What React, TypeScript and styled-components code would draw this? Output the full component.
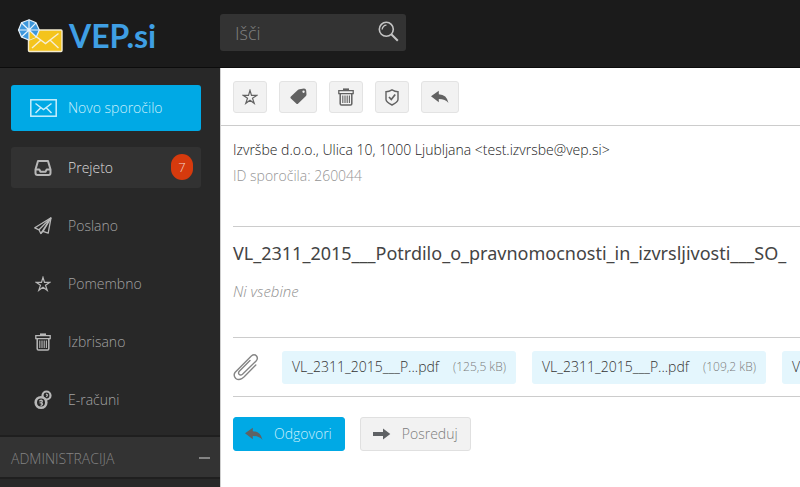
import React from "react";
import styled, { createGlobalStyle, css } from "styled-components";

const GlobalStyle = createGlobalStyle`
  *, *::before, *::after { box-sizing: border-box; }
  html, body, #root { height: 100%; }
  body {
    margin: 0;
    overflow: hidden;
    background: #fff;
    font-family: "Open Sans", "Noto Sans", sans-serif;
    font-size: 14px;
    font-weight: 300;
    line-height: 20px;
  }
  button, input { font: inherit; margin: 0; }
  button { cursor: pointer; }
  svg { display: block; flex: none; }
`;

const Page = styled.div`
  display: flex;
  flex-direction: column;
  min-height: 100%;
`;

const Header = styled.header`
  display: flex;
  align-items: center;
  height: 68px;
  padding-bottom: 3px;
  background: #1b1b1b;
  border-bottom: 1px solid #0c0c0c;
`;

const LogoLink = styled.a`
  display: flex;
  align-items: center;
  gap: 6px;
  width: 220px;
  padding: 8px 0 0 17px;
  color: #3f9fe4;
  font-family: Lato, "Open Sans", sans-serif;
  font-size: 32px;
  font-weight: 700;
  line-height: 40px;
  text-decoration: none;
`;

const Search = styled.form`
  display: flex;
  width: 186px;
  height: 37px;
  background: #333;
  border-radius: 3px;
`;

const SearchInput = styled.input`
  flex: 1;
  min-width: 0;
  padding: 2px 0 0 15px;
  border: 0;
  outline: 0;
  background: transparent;
  color: #ccc;
  font-size: 18px;
  &::placeholder { color: #808080; opacity: 1; }
`;

const SearchButton = styled.button`
  width: 34px;
  padding: 0 0 2px 6px;
  border: 0;
  background: transparent;
  color: #c4c4c4;
`;

const Body = styled.div`
  display: flex;
  flex: 1;
`;

const Sidebar = styled.aside`
  flex: none;
  width: 220px;
  background: #282828;
`;

const SidebarMenu = styled.div`
  padding: 17px 19px 15px 11px;
`;

const Compose = styled.button`
  display: flex;
  align-items: center;
  width: 100%;
  height: 46px;
  padding: 0;
  border: 0;
  border-radius: 3px;
  background: #00a9e5;
  color: #c9effc;
`;

const IconCell = styled.span`
  display: flex;
  justify-content: center;
  width: 57px;
  padding-left: 7px;
`;

const NavList = styled.ul`
  display: flex;
  flex-direction: column;
  gap: 17px;
  margin: 16px 0 0;
  padding: 0;
  list-style: none;
`;

const NavLink = styled.a<{ $active?: boolean }>`
  display: flex;
  align-items: center;
  height: 41px;
  padding-right: 8px;
  border-radius: 3px;
  color: #a2a2a2;
  text-decoration: none;
  ${(p) => p.$active && css`
    background: #323232;
    color: #dcdcdc;
  `}
  svg { color: #b8b8b8; }
`;

const Count = styled.span`
  display: flex;
  align-items: center;
  justify-content: center;
  width: 22px;
  height: 26px;
  margin: 0 0 2px auto;
  border-radius: 11px;
  background: #d63a0d;
  color: #f3d3c8;
  font-size: 13px;
`;

const SectionToggle = styled.button`
  display: flex;
  align-items: center;
  justify-content: space-between;
  width: 100%;
  height: 44px;
  padding: 3px 10px 0 11px;
  border: 0 solid #1f1f1f;
  border-width: 2px 0;
  background: #333;
  color: #838383;
`;

const Main = styled.main`
  flex: 1;
  min-width: 0;
  overflow: hidden;
  border-left: 1px solid #cfcfcf;
`;

const Toolbar = styled.div`
  display: flex;
  gap: 12px;
  padding: 13px 12px 12px;
  border-bottom: 1px solid #ccc;
`;

const ToolButton = styled.button<{ $wide?: boolean }>`
  display: flex;
  align-items: center;
  justify-content: center;
  width: ${(p) => (p.$wide ? 38 : 34)}px;
  height: 32px;
  padding: 0;
  border: 1px solid #e3e3e3;
  border-radius: 3px;
  background: #f2f2f2;
  color: #626262;
`;

const Content = styled.div`
  padding-left: 12px;
`;

const Sender = styled.div`
  height: 100px;
  padding-top: 11px;
  color: #222;
  line-height: 26px;
`;

const MessageId = styled.div`
  color: #959595;
`;

const Message = styled.article`
  height: 111px;
  padding-top: 12px;
  border-top: 1px solid #ccc;
`;

const Subject = styled.h1`
  margin: 0;
  color: #444;
  font-family: "Noto Sans", "Open Sans", sans-serif;
  font-size: 18px;
  font-weight: 400;
  line-height: 28px;
  white-space: nowrap;
`;

const EmptyNote = styled.p`
  margin: 14px 0 0;
  color: #909090;
  font-size: 15px;
  font-style: italic;
`;

const Attachments = styled.div`
  display: flex;
  align-items: center;
  height: 60px;
  border: 0 solid #ccc;
  border-width: 1px 0;
`;

const ClipCell = styled.span`
  flex: none;
  width: 49px;
`;

const AttachmentLink = styled.a`
  display: flex;
  flex: none;
  align-items: center;
  gap: 14px;
  height: 33px;
  margin-right: 16px;
  padding: 0 10px;
  border-radius: 3px;
  background: #e4f6fd;
  color: #333;
  text-decoration: none;
  white-space: nowrap;
`;

const FileSize = styled.span`
  color: #7c7c7c;
  font-size: 12px;
`;

const Actions = styled.div`
  display: flex;
  gap: 15px;
  padding: 20px 0;
`;

const ActionButton = styled.button<{ $primary?: boolean }>`
  display: flex;
  align-items: center;
  gap: 11px;
  height: 34px;
  padding: 0 12px 0 11px;
  border: 1px solid ${(p) => (p.$primary ? "#00a9e5" : "#e0e0e0")};
  border-radius: 3px;
  background: ${(p) => (p.$primary ? "#00a9e5" : "#f2f2f2")};
  color: ${(p) => (p.$primary ? "#c9effc" : "#7c7c7c")};
  svg { color: #5f6265; }
`;

const LogoMark = () => (
  <svg width="46" height="34" viewBox="0 0 46 34" aria-hidden="true">
    <rect x="11.5" y="11" width="33.5" height="21.5" rx="1" fill="#f4c41c" stroke="#f5ecd0" strokeWidth="1.4" />
    <path d="M15 14.5l13.500 10 13-10M15 29l9-8M41.500 29l-8-7.500" fill="none" stroke="#f7efd4" strokeWidth="1.400" />
    <path d="M12 .8l7 3 3.300 7.200-3 7-7.300 3-7.500-3-3-7 3-7.200z" fill="#3d97dc" stroke="#e6f2fb" strokeWidth="1.200" />
    <path d="M12 11l7.300 7-7.300 3z" fill="#f4c41c" />
    <path d="M12 11L12 .8M12 11l7-7.200M12 11h10.300M12 11l7.300 7M12 11v10M12 11l-7.500 7M12 11H1.500M12 11L4.500 3.800" stroke="#e6f2fb" strokeWidth="1.200" />
  </svg>
);

const SearchIcon = () => (
  <svg width="21" height="21" viewBox="0 0 21 21" fill="none" stroke="currentColor" aria-hidden="true">
    <circle cx="8.300" cy="8.300" r="7" strokeWidth="1.600" />
    <path d="M4.200 8.500a4.200 4.200 0 0 1 4.300-4.300" strokeWidth="1.300" />
    <path d="M13.300 13.300l6.500 6.500" strokeWidth="2" />
  </svg>
);

const EnvelopeIcon = () => (
  <svg width="27" height="18" viewBox="0 0 27 18" fill="none" stroke="currentColor" strokeWidth="1.500" aria-hidden="true">
    <rect x=".8" y=".8" width="25.400" height="16.400" />
    <path d="M5.500 4.500l8 6 8-6M5.500 14l5-5M21.500 14l-5-5" />
  </svg>
);

const InboxIcon = () => (
  <svg width="18" height="16" viewBox="0 0 18 16" fill="none" stroke="currentColor" strokeWidth="2" strokeLinejoin="round" aria-hidden="true">
    <path d="M4 1h10l2.500 8.500V13q0 2-2 2h-11q-2 0-2-2V9.500z" />
    <path d="M1.500 9.500h3.800l1.200 2.200h5l1.200-2.200h3.800" />
  </svg>
);

const PlaneIcon = () => (
  <svg width="18" height="18" viewBox="0 0 18 18" fill="none" stroke="currentColor" strokeWidth="1.300" strokeLinejoin="round" aria-hidden="true">
    <path d="M17 .8L.8 10.800l4.200 2 1.800 3.700 2.200-2.200 5.200 1.900z" />
    <path d="M17 .8L5 12.800M17 .8L6.800 16.500M17 .8L9 14.300" />
  </svg>
);

const StarIcon = () => (
  <svg width="16" height="16" viewBox="0 0 16 16" fill="none" stroke="currentColor" strokeWidth="1.200" aria-hidden="true">
    <path d="M8 1.300l1.500 5h5.300L10.500 9.300l1.700 5L8 11.200l-4.200 3.100 1.700-5L1.200 6.300h5.300z" />
  </svg>
);

const TrashIcon = () => (
  <svg width="16" height="18" viewBox="0 0 16 18" fill="none" stroke="currentColor" aria-hidden="true">
    <path d="M5 1.200h6" strokeWidth="1.600" />
    <path d="M.8 2.700h14.400v3H.8z" strokeWidth="1.300" />
    <path d="M2.200 5.700v10.100q0 1.300 1.300 1.300h9q1.300 0 1.300-1.300V5.700" strokeWidth="1.500" />
    <path d="M4.800 7.500v7.500M7 7.500v7.500M9.200 7.500v7.500M11.400 7.500v7.500" strokeWidth="1.100" />
  </svg>
);

const CoinsIcon = () => (
  <svg width="18" height="20" viewBox="0 0 18 20" fill="none" stroke="currentColor" aria-hidden="true">
    <circle cx="12.500" cy="5.500" r="4" strokeWidth="2.200" />
    <path d="M12 4l1.500 1-1 2" strokeWidth="1.200" />
    <circle cx="7" cy="12.500" r="5.300" fill="#282828" strokeWidth="2.600" />
    <path d="M5.300 11.200q2.700-2 3 0 0 1-1.500 1.600 2 .5 1.500 1.800l-1.700 1" strokeWidth="1.400" />
  </svg>
);

const TagIcon = () => (
  <svg width="17" height="18" viewBox="0 0 17 18" aria-hidden="true">
    <path fill="currentColor" fillRule="evenodd" d="M9.500 1.200L14 .6q2 0 2.200 2l.3 4q0 1-.8 1.700l-7.500 7.300q-1 1-2 0L.9 10.500q-1-1 0-2L7.800 2q.8-.7 1.700-.8zM13.500 2.500a1.200 1.200 0 1 0 .1 2.400 1.200 1.200 0 0 0-.1-2.400z" />
  </svg>
);

const ShieldIcon = () => (
  <svg width="14" height="17" viewBox="0 0 14 17" fill="none" stroke="currentColor" strokeWidth="1.400" aria-hidden="true">
    <path d="M7 .9q3 1.800 6 1.800v7.800q0 2.500-6 5.500-6-3-6-5.500V2.700q3 0 6-1.800z" />
    <path d="M4 8l2.300 2.500L10.200 5.500" strokeWidth="1.700" />
  </svg>
);

const ReplyIcon = () => (
  <svg width="18" height="14" viewBox="0 0 18 14" aria-hidden="true">
    <path fill="currentColor" d="M0 6.200L7.800.8v3.400q8 .3 9.700 8.800-3-4-9.700-4v3.200z" />
  </svg>
);

const ForwardIcon = () => (
  <svg width="19" height="14" viewBox="0 0 19 14" aria-hidden="true">
    <path fill="currentColor" d="M1 5h10V1.500L18.300 7 11 12.500V9H1z" />
  </svg>
);

const ClipIcon = () => (
  <svg width="26" height="28" viewBox="0 0 26 28" fill="none" stroke="#858585" strokeWidth="1.400" strokeLinecap="round" aria-hidden="true">
    <path d="M22.800 12L11.200 23.700l-2.500 2q-3.200 1.800-5.900-.2-2.800-3-.8-6L18.300 3q3-2.300 5.200 0 1.900 2.500-.4 5L9.500 21.300q-2 1.500-3.400 0-1.200-1.500.2-3L17 7.600" />
  </svg>
);

const MinusIcon = () => (
  <svg width="11" height="3" viewBox="0 0 11 3" aria-hidden="true">
    <path d="M0 1h11" stroke="#a0a0a0" strokeWidth="1.500" />
  </svg>
);

const folders = [
  { label: "Prejeto", icon: <InboxIcon />, count: 7 },
  { label: "Poslano", icon: <PlaneIcon /> },
  { label: "Pomembno", icon: <StarIcon /> },
  { label: "Izbrisano", icon: <TrashIcon /> },
  { label: "E-računi", icon: <CoinsIcon /> },
];

const tools = [
  { label: "Pomembno", icon: <StarIcon /> },
  { label: "Oznaka", icon: <TagIcon />, wide: true },
  { label: "Izbriši", icon: <TrashIcon /> },
  { label: "Preveri", icon: <ShieldIcon /> },
  { label: "Odgovori", icon: <ReplyIcon />, wide: true },
];

const sizes = ["125,5 kB", "109,2 kB", "118,4 kB"];

export default function App() {
  return (
    <Page>
      <GlobalStyle />
      <Header>
        <LogoLink href="#">
          <LogoMark />
          VEP.si
        </LogoLink>
        <Search role="search" onSubmit={(e) => e.preventDefault()}>
          <SearchInput type="text" placeholder="Išči" aria-label="Išči" />
          <SearchButton type="submit" aria-label="Išči">
            <SearchIcon />
          </SearchButton>
        </Search>
      </Header>
      <Body>
        <Sidebar>
          <SidebarMenu>
            <Compose type="button">
              <IconCell><EnvelopeIcon /></IconCell>
              Novo sporočilo
            </Compose>
            <NavList>
              {folders.map((f) => (
                <li key={f.label}>
                  <NavLink href="#" $active={f.count !== undefined}>
                    <IconCell>{f.icon}</IconCell>
                    {f.label}
                    {f.count !== undefined && <Count>{f.count}</Count>}
                  </NavLink>
                </li>
              ))}
            </NavList>
          </SidebarMenu>
          <SectionToggle type="button" aria-expanded="true">
            ADMINISTRACIJA
            <MinusIcon />
          </SectionToggle>
        </Sidebar>
        <Main>
          <Toolbar>
            {tools.map((t) => (
              <ToolButton key={t.label} type="button" aria-label={t.label} $wide={t.wide}>
                {t.icon}
              </ToolButton>
            ))}
          </Toolbar>
          <Content>
            <Sender>
              Izvršbe d.o.o., Ulica 10, 1000 Ljubljana &lt;test.izvrsbe@vep.si&gt;
              <MessageId>ID sporočila: 260044</MessageId>
            </Sender>
            <Message>
              <Subject>VL_2311_2015___Potrdilo_o_pravnomocnosti_in_izvrsljivosti___SO_</Subject>
              <EmptyNote>Ni vsebine</EmptyNote>
            </Message>
            <Attachments>
              <ClipCell><ClipIcon /></ClipCell>
              {sizes.map((s) => (
                <AttachmentLink key={s} href="#">
                  VL_2311_2015___P...pdf
                  <FileSize>({s})</FileSize>
                </AttachmentLink>
              ))}
            </Attachments>
            <Actions>
              <ActionButton type="button" $primary>
                <ReplyIcon />
                Odgovori
              </ActionButton>
              <ActionButton type="button">
                <ForwardIcon />
                Posreduj
              </ActionButton>
            </Actions>
          </Content>
        </Main>
      </Body>
    </Page>
  );
}
